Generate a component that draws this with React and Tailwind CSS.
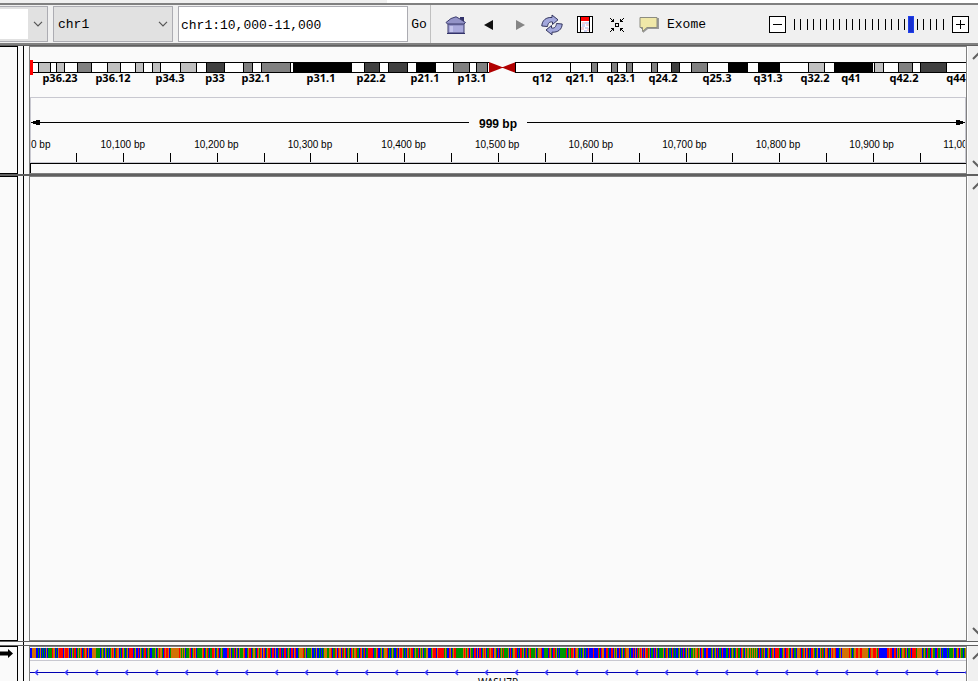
import { useState } from 'react'

const VIEW_WIDTH = 936

const pct = (px) => `${(px / VIEW_WIDTH) * 100}%`

const STAIN = {
  light: '#c0c0c0',
  mid: '#808080',
  dark: '#404040',
  black: '#000000',
}

// start, width, stain
const BANDS = [
  [8, 13, 'light'],
  [26, 9, 'light'],
  [47, 15, 'mid'],
  [77, 14, 'light'],
  [105, 9, 'light'],
  [122, 9, 'light'],
  [150, 17, 'light'],
  [176, 19, 'dark'],
  [213, 10, 'mid'],
  [231, 30, 'mid'],
  [263, 59, 'black'],
  [334, 16, 'dark'],
  [358, 20, 'dark'],
  [386, 20, 'black'],
  [423, 17, 'mid'],
  [446, 12, 'mid'],
  [540, 1, 'black'],
  [561, 7, 'mid'],
  [581, 7, 'mid'],
  [596, 7, 'mid'],
  [621, 7, 'mid'],
  [641, 9, 'dark'],
  [661, 17, 'mid'],
  [698, 20, 'black'],
  [728, 22, 'black'],
  [778, 17, 'light'],
  [804, 39, 'black'],
  [844, 10, 'light'],
  [868, 15, 'mid'],
  [890, 27, 'dark'],
]

const BAND_LABELS = [
  ['p36.23', 30],
  ['p36.12', 83],
  ['p34.3', 140],
  ['p33', 185],
  ['p32.1', 226],
  ['p31.1', 291],
  ['p22.2', 341],
  ['p21.1', 395],
  ['p13.1', 442],
  ['q12', 512],
  ['q21.1', 550],
  ['q23.1', 591],
  ['q24.2', 633],
  ['q25.3', 687],
  ['q31.3', 738],
  ['q32.2', 785],
  ['q41', 821],
  ['q42.2', 874],
  ['q44', 926],
]

const RULER_LABELS = [
  '10,100 bp',
  '10,200 bp',
  '10,300 bp',
  '10,400 bp',
  '10,500 bp',
  '10,600 bp',
  '10,700 bp',
  '10,800 bp',
  '10,900 bp',
  '11,000 bp',
]

const BASE_COLORS = {
  A: '#009600',
  C: '#0000ff',
  G: '#d17105',
  T: '#ff0000',
}

const SEQUENCE = [
  'CCGGGGCCACGCACACGCAAAATGGCACGTTTTCGT',
  'TTGCACGATTCAGAGTCATGTCGCCCGGGGAAAACA',
  'GACGACACAGTGCATGGCACTGACAGCTTTTCAGCC',
  'TCGACATTCAGACCAAAGCAGTGGACTGTTGCAGGG',
  'GGGGGTGAGAGCAAAGTCAGTGCAAAAAGTCAGTAC',
  'AATTGCAGTCAGACCCCTTAGCAATCGACGAAAGTC',
  'CAGTTCAGGACTGATGCGTCAGTTACTTCGCCATTC',
  'ACTTCAGACTTCGTCCAGGGGTAGCAAAAGCCACGC',
  'CACACAGGGAAGGTCAATGCTGGCTAGTCAGACTGA',
  'GGTAACTGCATCAATTTTTCAAGTCCAGCAGGGTCA',
  'CAGACCATCGTTGACACGTAGTTCAGAATCGAGCAA',
  'GGCCCAGTTTCGTTTTTTAGACCTGCAGTTAAAAAA',
  'AGTGAGTCGAACTTCGCTTCAGTGCAATGTTCGGAC',
  'TCAGATAAAAGCTCAGGTTCACTTAGCATCAGTAAA',
  'AGCAGGGTCCAAAACTGACTTAGCACAAAAAATCAG',
  'ATTGCTGGACACAGCACCTCCCCTCCCCTACTGGCC',
  'TTACCTTCGAGCCTCAGCATGGGCACCTCGCTAGTG',
  'CTCGTTAGCAACTCGACAAAAGCATGCAACTACACC',
  'AGCACTCAGCGACAAGAGGTAGCTGACCTTCCCAGC',
  'AGCTCAACTCCCAACTCAGACAGTAACTGACGAGGA',
  'GAGAGAGACTCATAGCCAGTCATGCTTTTACCAGTC',
  'TTGACGTCAACGGGTCATGCGTCACTTGACAGCCGA',
  'TACGGTCACGTGGTCCCAGCGGGGGGGTGACAGGTT',
  'GGTTGGGGGGACTGGTTTGATCCCCCCCCTTGTTCC',
  'TTCGAGCAGGTAGCAATCTTTTAGGGGGCAGACTAA',
  'CTGAACCTAAGCACCCCACAAAAGCCAGTCGAACAG',
].join('')

function Chevron({ up = false, className }) {
  return (
    <svg
      viewBox="0 0 12 8"
      className={className}
      fill="none"
      stroke="#606060"
      strokeWidth="2"
    >
      <path d={up ? 'M1 7 L6 2 L11 7' : 'M1 1 L6 6 L11 1'} />
    </svg>
  )
}

function Select({ label, options, className, fieldClass }) {
  return (
    <div className={`relative border border-[#acacb2] bg-[#e1e1e1] ${className}`}>
      <select
        aria-label={label}
        className={`block h-full appearance-none pl-1 pt-0.5 outline-none ${fieldClass}`}
      >
        {options.map((o) => (
          <option key={o}>{o}</option>
        ))}
      </select>
      <svg
        viewBox="0 0 10 6"
        className="pointer-events-none absolute right-1 top-1/2 h-1.5 w-2.5 -translate-y-1/2"
        fill="none"
        stroke="#555"
        strokeWidth="1.2"
      >
        <path d="M1 .8 L5 4.8 L9 .8" />
      </svg>
    </div>
  )
}

function HomeIcon() {
  return (
    <svg viewBox="0 0 22 18" className="h-[18px] w-[22px]">
      <path d="M15 1h4v6h-4z" fill="#33336a" />
      <path d="M3 7h16v10H3z" fill="#a9a9dc" stroke="#3b3b6d" />
      <path d="M4 8h14v1.5H4z" fill="#7c7cb4" />
      <path d="M5 10h3v6H5z" fill="#c3c3ec" />
      <path d="M1 6.5 L6 2.5 L11 .8 L15 3 L20.5 6.5 L19 8 H2.5 Z" fill="#9393c8" stroke="#3b3b6d" />
      <path d="M2 17.5h18" stroke="#33336a" />
    </svg>
  )
}

function RefreshIcon() {
  return (
    <svg viewBox="0 0 22 22" className="h-[22px] w-[22px]">
      <g fill="#a3a8dc" stroke="#34365f" strokeWidth="1">
        <path d="M.8 12 C1 6.500 5 3 11 3.500 V1 L17 5.800 L11.500 10.500 V8 C8.500 7.500 7 9 6.500 12.500 Z" />
        <path d="M21.200 10 C21 15.500 17 18.500 11 18.200 V20.800 L5 16 L10.500 11.500 V14 C13.500 14.500 15 13 15.500 9.500 Z" />
      </g>
    </svg>
  )
}

function RegionIcon() {
  return (
    <svg viewBox="0 0 16 17" className="h-[17px] w-4" shapeRendering="crispEdges">
      <rect width="16" height="17" fill="#000" />
      <rect x="1" y="1" width="14" height="15" fill="#fff" />
      <path d="M5 6h3v2H5zM9 8h3v2H9zM4 11h3v3H4zM10 12h2v3h-2z" fill="#f6cfd4" />
      <path d="M8 6h4v2H8zM5 8h3v3H5zM8 11h3v2H8zM7 14h3v2H7z" fill="#cfd4f4" />
      <path d="M4 1h8v4H4z" fill="#f00" />
      <path d="M3 1h1v15H3zM12 1h1v15h-1z" fill="#000" />
    </svg>
  )
}

function FitIcon() {
  return (
    <svg viewBox="0 0 14 14" className="h-3.5 w-3.5" shapeRendering="crispEdges">
      <path d="M5 5h4v4h-4zM6 6v2h2v-2z" fillRule="evenodd" />
      <path d="M0 0h1v1h1v1h1v-1h1v3h-3v-1h1v-1h-1v-1h-1z" />
      <path d="M14 0h-1v1h-1v1h-1v-1h-1v3h3v-1h-1v-1h1v-1h1z" />
      <path d="M0 14h1v-1h1v-1h1v1h1v-3h-3v1h1v1h-1v1h-1z" />
      <path d="M14 14h-1v-1h-1v-1h-1v1h-1v-3h3v1h-1v1h1v1h1z" />
    </svg>
  )
}

function CommentIcon() {
  return (
    <svg viewBox="0 0 20 17" className="h-[17px] w-5">
      <path d="M2 2h18v11H9l-5 4v-4H2z" fill="#999" />
      <path d="M1 1.500h17v10H8l-4.500 4v-4H1z" fill="#f0e8a8" stroke="#8d8d80" />
    </svg>
  )
}

function ZoomSlider() {
  const [zoom, setZoom] = useState(18)

  return (
    <div className="flex items-center">
      <button
        aria-label="Zoom out"
        onClick={() => setZoom((z) => Math.max(0, z - 1))}
        className="flex h-[17px] w-[17px] items-center justify-center border border-black bg-white"
      >
        <span className="h-px w-[9px] bg-black" />
      </button>

      <div className="relative mx-[5px] h-[17px] w-[156px]">
        <div className="flex h-full items-center justify-between px-[3px]">
          {Array.from({ length: 24 }, (_, i) => (
            <span key={i} className="h-[11px] w-px bg-black" />
          ))}
        </div>
        <input
          type="range"
          aria-label="Zoom level"
          min="0"
          max="23"
          value={zoom}
          onChange={(e) => setZoom(Number(e.target.value))}
          className="absolute inset-0 h-full w-full appearance-none bg-transparent [&::-webkit-slider-thumb]:h-[17px] [&::-webkit-slider-thumb]:w-1.5 [&::-webkit-slider-thumb]:appearance-none [&::-webkit-slider-thumb]:border [&::-webkit-slider-thumb]:border-[#2040e8] [&::-webkit-slider-thumb]:bg-[#1830d0]"
        />
      </div>

      <button
        aria-label="Zoom in"
        onClick={() => setZoom((z) => Math.min(23, z + 1))}
        className="flex h-[17px] w-[17px] items-center justify-center border border-black bg-white"
      >
        <svg viewBox="0 0 9 9" className="h-[9px] w-[9px]" stroke="#000">
          <path d="M0 4.500h9M4.500 0v9" />
        </svg>
      </button>
    </div>
  )
}

function Toolbar() {
  const [locus, setLocus] = useState('chr1:10,000-11,000')

  return (
    <header className="flex h-[42px] shrink-0 items-center border-y-2 border-[#808080] bg-[#f0f0f0] pr-[9px]">
      <Select
        label="Genome"
        options={['']}
        className="h-9 w-12 border-l-0 py-0.5"
        fieldClass="w-7 bg-white"
      />
      <Select
        label="Chromosome"
        options={['chr1']}
        className="ml-[5px] h-9 w-[120px]"
        fieldClass="w-full"
      />
      <input
        aria-label="Locus"
        value={locus}
        onChange={(e) => setLocus(e.target.value)}
        className="ml-[5px] h-9 w-[230px] border border-[#acacb2] bg-white px-0.5 pt-0.5 outline-none"
      />
      <button className="h-[38px] w-[23px] border-r border-[#c0c0c0] pt-0.5 text-center">
        Go
      </button>

      <div className="ml-3.5 flex items-center pt-px">
        <button aria-label="Home"><HomeIcon /></button>
        <button aria-label="Back" className="ml-[17px]">
          <svg viewBox="0 0 9 10" className="h-2.5 w-[9px]"><path d="M0 5 L9 0 V10 Z" fill="#111" /></svg>
        </button>
        <button aria-label="Forward" className="ml-[23px]">
          <svg viewBox="0 0 9 10" className="h-2.5 w-[9px]"><path d="M9 5 L0 0 V10 Z" fill="#858585" /></svg>
        </button>
        <button aria-label="Refresh" className="ml-4"><RefreshIcon /></button>
        <button aria-label="Region of interest" className="ml-3.5"><RegionIcon /></button>
        <button aria-label="Fit to window" className="ml-[17px]"><FitIcon /></button>
        <button className="ml-[15px] flex items-center gap-2">
          <CommentIcon />
          Exome
        </button>
      </div>

      <div className="ml-auto">
        <ZoomSlider />
      </div>
    </header>
  )
}

function Ideogram() {
  return (
    <svg
      className="block h-[50px] w-full overflow-hidden text-[11px] font-bold"
      fontFamily="'Noto Sans', 'Open Sans', sans-serif"
      shapeRendering="crispEdges"
    >
      <rect y="15" width="100%" height="11" fill="#000" />
      <rect y="16" width="100%" height="9" fill="#fff" />
      {BANDS.map(([start, width, stain]) => (
        <g key={start}>
          <rect x={pct(start)} y="15" width={pct(width)} height="11" fill="#000" />
          {width > 2 && (
            <svg x={pct(start)} y="16" width={pct(width)} height="9">
              <rect x={pct(VIEW_WIDTH / width)} width={pct(VIEW_WIDTH * (1 - 2 / width))} height="9" fill={STAIN[stain]} />
            </svg>
          )}
        </g>
      ))}

      {/* centromere */}
      <svg x={pct(459)} y="15" width="27" height="11" shapeRendering="auto">
        <path d="M0 0h27v11H0z" fill="#fafafa" />
        <path d="M0 0 L13 5 H14 L27 0 V11 L14 6 H13 L0 11 Z" fill="#b00000" />
        <path d="M26.500 0v11" stroke="#000" />
      </svg>

      {BAND_LABELS.map(([name, x]) => (
        <text key={name} x={pct(x)} y="35" textAnchor="middle">
          {name}
        </text>
      ))}

      {/* current locus */}
      <rect y="13" width="3" height="15" fill="#f00" />
    </svg>
  )
}

function Ruler() {
  return (
    <div className="border border-[#c8c8d0]">
      <div className="flex h-[49px] items-center">
        <svg className="h-[5px] min-w-0 flex-1" shapeRendering="crispEdges">
          <rect y="2" width="100%" height="1" />
          <path d="M9 0h-4v1h-3v3h3v1h4z" />
        </svg>
        <span className="w-[58px] pt-0.5 text-center font-['Liberation_Sans',Arial,sans-serif] text-xs font-bold">
          999 bp
        </span>
        <svg className="h-[5px] min-w-0 flex-1" shapeRendering="crispEdges">
          <rect y="2" width="100%" height="1" />
          <svg x="100%" className="overflow-visible">
            <path d="M-9 0h4v1h3v3h-3v1h-4z" />
          </svg>
        </svg>
      </div>
      <svg
        className="-mt-3 block h-[27px] w-full overflow-hidden text-[10px]"
        fontFamily="'Liberation Sans', Arial, sans-serif"
        shapeRendering="crispEdges"
      >
        <text y="13">0 bp</text>
        {RULER_LABELS.map((label, i) => (
          <text key={label} x={pct(92 + i * 93.8)} y="13" textAnchor="middle">
            {label}
          </text>
        ))}
        {Array.from({ length: 19 }, (_, i) => (
          <rect key={i} x={pct(45 + i * 47)} y="18" width="1" height="9" />
        ))}
      </svg>
    </div>
  )
}

function SequenceTrack() {
  return (
    <svg
      viewBox="0 0 936 10"
      preserveAspectRatio="none"
      className="block h-2.5 w-full"
      shapeRendering="crispEdges"
    >
      {SEQUENCE.split('').map((base, i) => (
        <rect key={i} x={i} width="1" height="10" fill={BASE_COLORS[base]} />
      ))}
    </svg>
  )
}

function GeneTrack() {
  return (
    <div className="border-t border-[#c8c8d0] pt-[7px]">
      <svg className="block h-[9px] w-full" fill="none">
        <rect y="4" width="100%" height="1" fill="#0000b2" />
        {Array.from({ length: 32 }, (_, i) => (
          <svg key={i} x={pct(5 + i * 30)} className="overflow-visible">
            <path d="M3 2 L.5 4.500 L3 7" stroke="#3c3cff" strokeWidth="1.5" />
          </svg>
        ))}
      </svg>
      <div className="text-center font-['Noto_Sans',sans-serif] text-[10px] leading-[10px] text-black">
        WASH7P
      </div>
    </div>
  )
}

function ScrollBar({ down = true }) {
  return (
    <div className="flex w-[11px] shrink-0 flex-col justify-between overflow-hidden border-l border-white bg-[#f0f0f0] py-1.5 pl-1">
      <button aria-label="Scroll up">
        <Chevron up className="h-2 w-3" />
      </button>
      {down && (
        <button aria-label="Scroll down">
          <Chevron className="h-2 w-3" />
        </button>
      )}
    </div>
  )
}

function PanelRow({ name, children, className = '', last = false }) {
  return (
    <section className={`flex overflow-hidden ${className}`}>
      <div className={`w-[18px] shrink-0 border-t border-r border-black bg-[#fafafa] ${last ? '' : 'border-b'}`}>
        {name}
      </div>
      <div className="w-1.5 shrink-0 border-r border-black" />
      <div className="w-[5px] shrink-0" />
      <div className={`min-w-0 flex-1 border-x border-t border-[#808080] bg-[#fafafa] ${last ? '' : 'border-b'}`}>
        {children}
      </div>
      <ScrollBar down={!last} />
    </section>
  )
}

export default function App() {
  return (
    <div className="flex h-screen flex-col overflow-hidden bg-[#fafafa] font-['Liberation_Mono','Courier_New',monospace] text-[13px] text-black">
      <div className="h-[3px] shrink-0 bg-white">
        <div className="h-full w-[387px] bg-[#f0f0f0]" />
      </div>

      <Toolbar />

      <div className="h-px shrink-0 bg-[#606060]" />

      <PanelRow className="shrink-0">
        <Ideogram />
        <Ruler />
        <div className="h-2.5 border-l border-t border-black" />
      </PanelRow>

      <div className="h-0.5 shrink-0 bg-[#606060]" />

      <PanelRow className="min-h-0 flex-1" />

      <div className="flex h-[5px] shrink-0 border-y border-[#606060]">
        <div className="w-6 border-r border-black" />
      </div>

      <PanelRow
        className="h-[35px] shrink-0"
        last
        name={
          <svg viewBox="0 0 13 9" className="mt-0.5 h-[9px] w-[13px]">
            <path d="M0 2.500h8V0l5 4.500-5 4.500V6.500H0z" />
          </svg>
        }
      >
        <div className="pb-0.5 pt-px">
          <SequenceTrack />
        </div>
        <GeneTrack />
      </PanelRow>
    </div>
  )
}
